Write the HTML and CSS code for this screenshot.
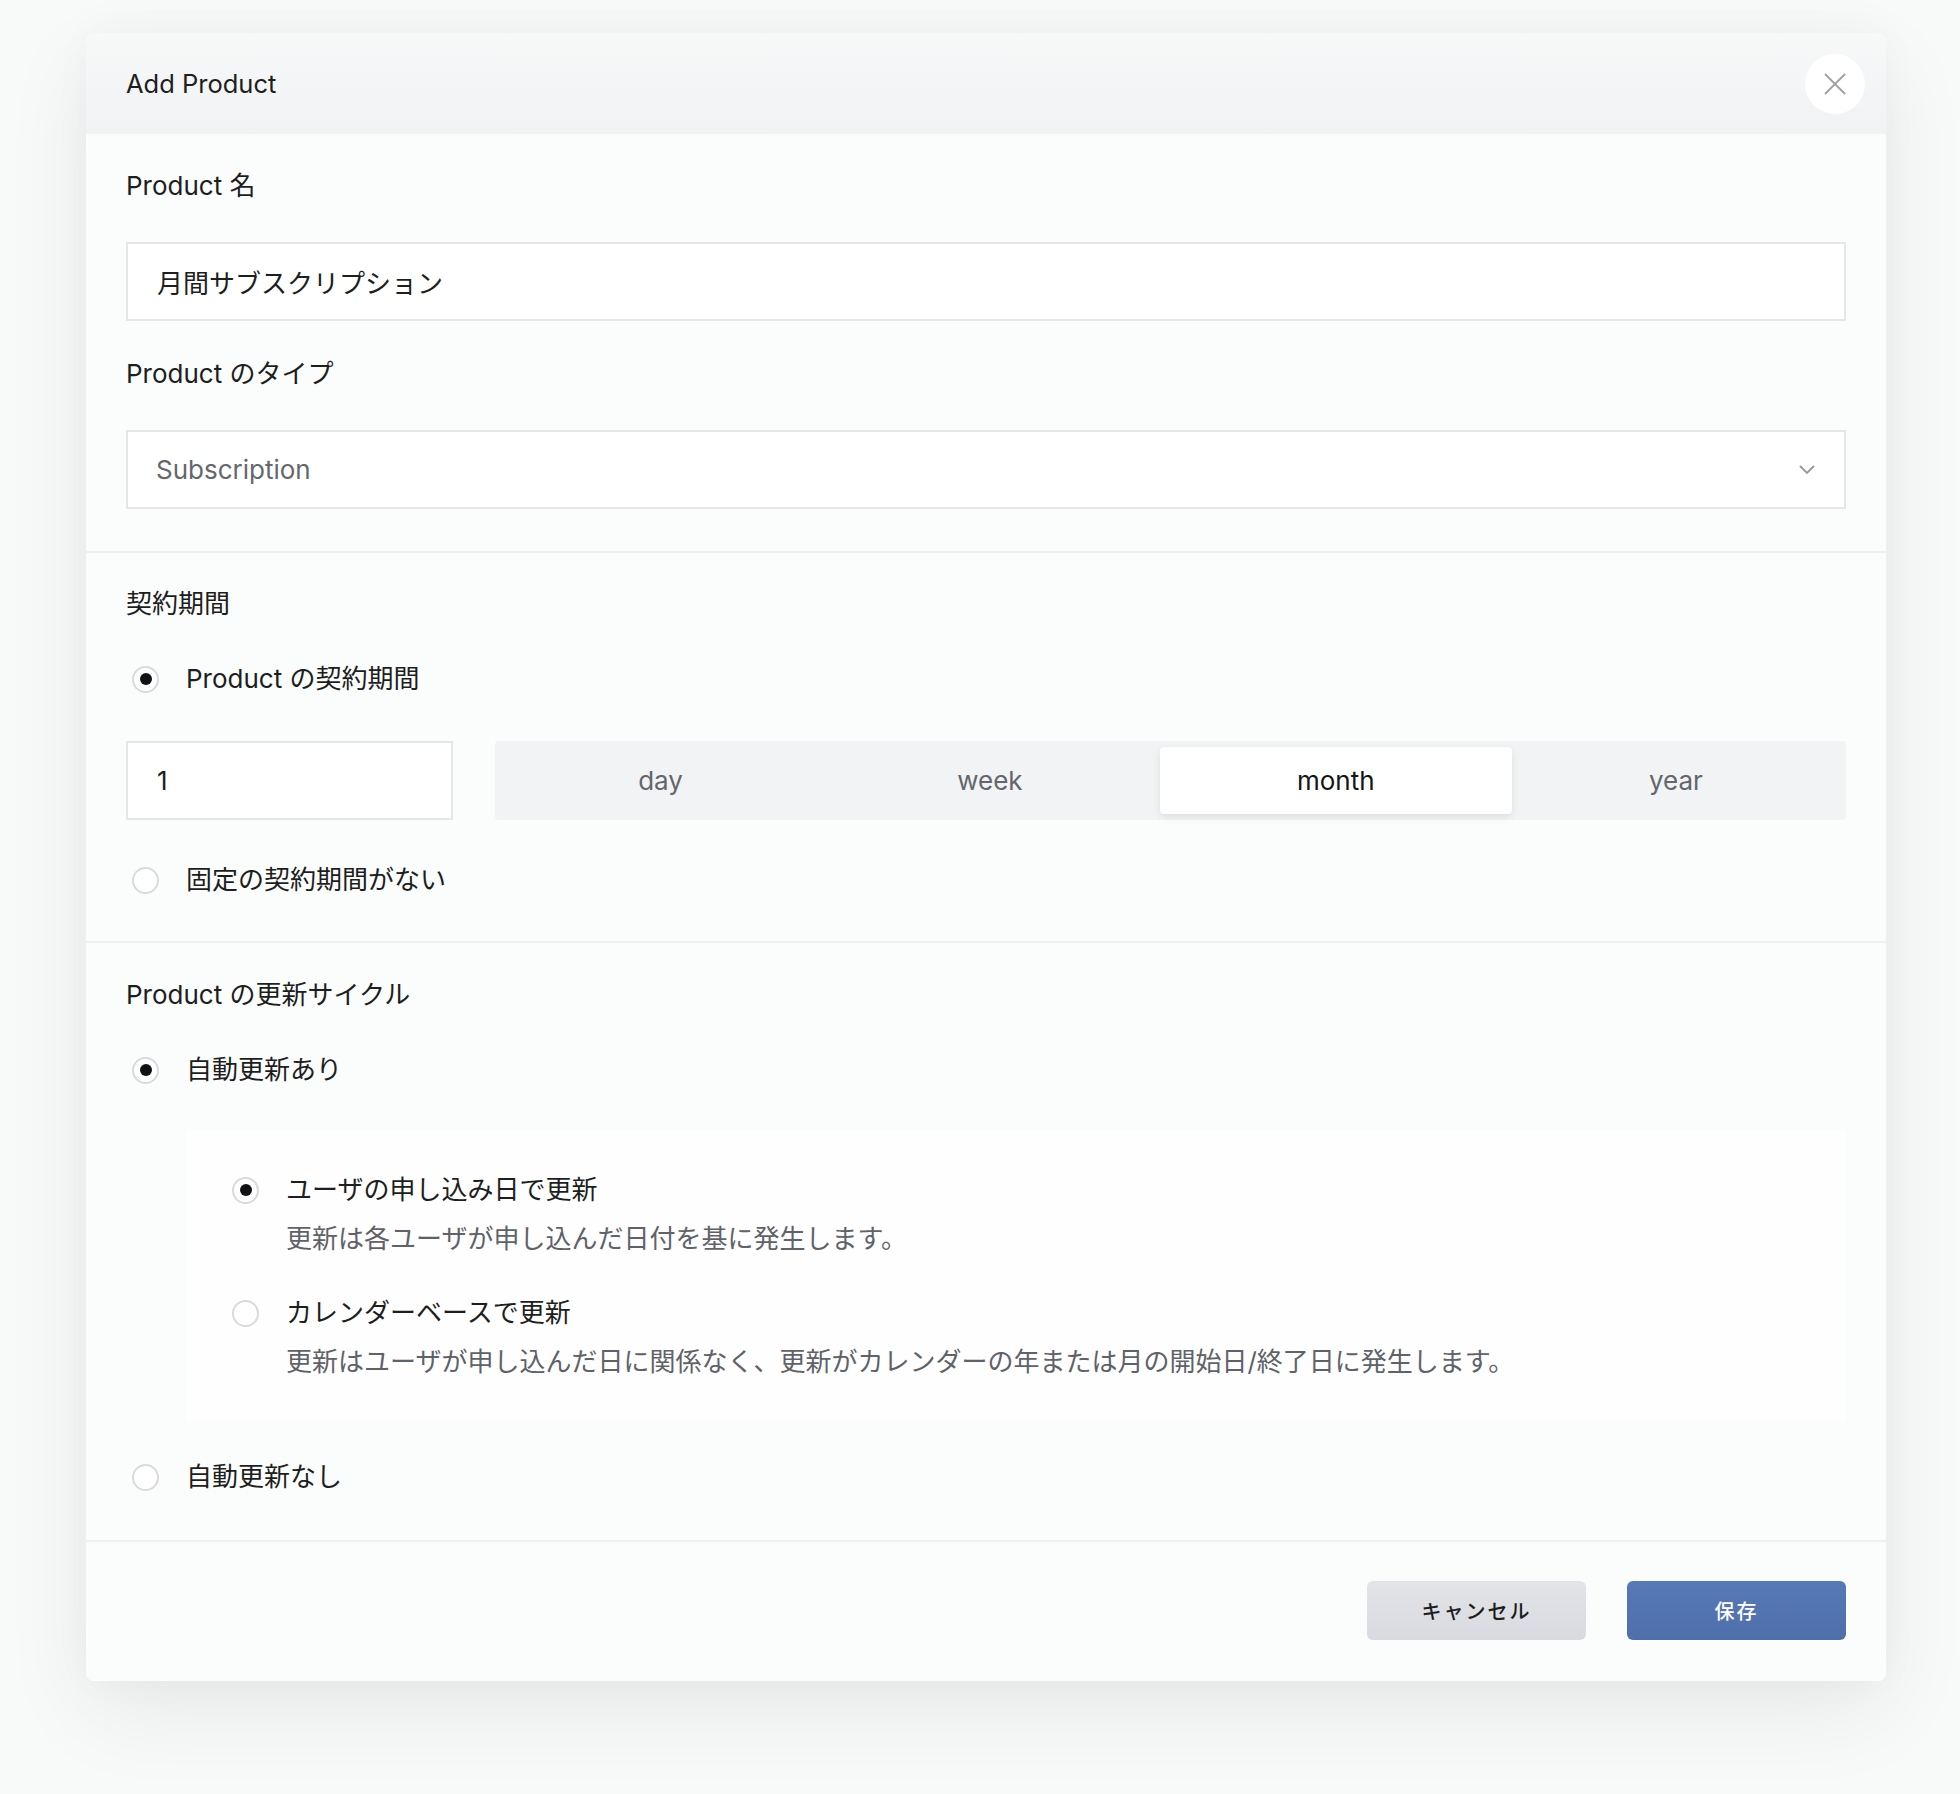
FILE: index.html
```html
<!DOCTYPE html>
<html lang="ja">
<head>
<meta charset="utf-8">
<title>Add Product</title>
<link rel="stylesheet" href="styles.css">
</head>
<body>
<div class="page">
  <div class="modal">
    <div class="modal-header">
      <h1 class="modal-title">Add Product</h1>
      <button class="close-btn" type="button" aria-label="close">
        <svg width="22" height="22" viewBox="0 0 22 22"><path d="M1 1L21 21M21 1L1 21" stroke="#a3a3a3" stroke-width="2" fill="none"/></svg>
      </button>
    </div>
    <div class="card">
      <section class="sec sec-basic">
        <div class="label">Product 名</div>
        <div class="field field-name">月間サブスクリプション</div>
        <div class="label">Product のタイプ</div>
        <div class="field field-select">
          <span class="select-value">Subscription</span>
          <svg class="chevron" width="16" height="9" viewBox="0 0 16 9"><path d="M1 1L8 8L15 1" stroke="#96989c" stroke-width="1.8" fill="none"/></svg>
        </div>
      </section>

      <section class="sec sec-term">
        <div class="label">契約期間</div>
        <div class="radio-row gap-a">
          <span class="radio checked"></span>
          <span class="radio-label">Product の契約期間</span>
        </div>
        <div class="term-row">
          <div class="field field-num">1</div>
          <div class="segmented">
            <div class="seg">day</div>
            <div class="seg">week</div>
            <div class="seg active">month</div>
            <div class="seg">year</div>
          </div>
        </div>
        <div class="radio-row gap-b">
          <span class="radio"></span>
          <span class="radio-label">固定の契約期間がない</span>
        </div>
      </section>

      <section class="sec sec-cycle">
        <div class="label">Product の更新サイクル</div>
        <div class="radio-row gap-a">
          <span class="radio checked"></span>
          <span class="radio-label">自動更新あり</span>
        </div>
        <div class="subbox">
          <div class="sub-option">
            <div class="radio-row sub-row">
              <span class="radio checked"></span>
              <span class="radio-label">ユーザの申し込み日で更新</span>
            </div>
            <div class="desc">更新は各ユーザが申し込んだ日付を基に発生します。</div>
          </div>
          <div class="sub-option sub-second">
            <div class="radio-row sub-row">
              <span class="radio"></span>
              <span class="radio-label">カレンダーベースで更新</span>
            </div>
            <div class="desc">更新はユーザが申し込んだ日に関係なく、更新がカレンダーの年または月の開始日/終了日に発生します。</div>
          </div>
        </div>
        <div class="radio-row gap-c">
          <span class="radio"></span>
          <span class="radio-label">自動更新なし</span>
        </div>
      </section>

      <footer class="footer">
        <button class="btn btn-cancel" type="button">キャンセル</button>
        <button class="btn btn-save" type="button">保存</button>
      </footer>
    </div>
  </div>
</div>
</body>
</html>
```

FILE: styles.css
```css
* { box-sizing: border-box; }

html, body {
  margin: 0;
  padding: 0;
}

body {
  background: #f8f9f9;
  font-family: Inter, "Noto Sans CJK JP", sans-serif;
  color: #1d1e20;
  width: 1960px;
  height: 1794px;
  overflow: hidden;
}

.page {
  padding: 33px 0 0 86px;
}

.modal {
  width: 1800px;
  box-shadow: 0 30px 90px rgba(0, 0, 0, 0.07), 0 0 40px rgba(0, 0, 0, 0.03);
  border-radius: 8px;
}

.modal-header {
  height: 101px;
  background: linear-gradient(#f7f8f8, #f1f2f4);
  border-radius: 8px 8px 0 0;
  display: flex;
  align-items: center;
  justify-content: space-between;
  padding: 0 21px 0 40px;
}

.modal-title {
  margin: 0;
  font-size: 25.5px;
  font-weight: 400;
  line-height: 36px;
  color: #1d1e20;
}

.close-btn {
  width: 60px;
  height: 60px;
  border-radius: 50%;
  border: none;
  background: #ffffff;
  display: flex;
  align-items: center;
  justify-content: center;
  padding: 0;
}

.card {
  background: #fbfcfc;
  border-radius: 0 0 8px 8px;
}

.sec {
  padding: 34px 40px 42px;
  border-bottom: 2px solid #eef0f1;
}

.label {
  font-size: 26px;
  line-height: 36px;
  color: #1d1e20;
}

.sec-basic .label {
  margin-bottom: 38px;
}

.field {
  height: 79px;
  background: #ffffff;
  border: 2px solid #e4e6e8;
  display: flex;
  align-items: center;
  padding: 0 29px;
  font-size: 26px;
  color: #1d1e20;
}

.field-name {
  margin-bottom: 35px;
}

.field-select {
  justify-content: space-between;
  padding: 0 29px 0 28px;
}

.select-value {
  color: #64676d;
}

.sec-term {
  padding: 33px 40px 43px;
}

.radio-row {
  display: flex;
  align-items: center;
  height: 36px;
  padding-left: 6px;
}

.gap-a { margin-top: 39px; }
.gap-b { margin-top: 42px; }
.gap-c { margin-top: 39px; }

.radio {
  width: 27px;
  height: 27px;
  border-radius: 50%;
  border: 2px solid #d8dadd;
  background: #ffffff;
  display: flex;
  align-items: center;
  justify-content: center;
  flex: none;
}

.radio.checked::after {
  content: "";
  width: 12px;
  height: 12px;
  border-radius: 50%;
  background: #111214;
}

.radio-label {
  margin-left: 27px;
  font-size: 26px;
  line-height: 36px;
  color: #1d1e20;
}

.term-row {
  display: flex;
  gap: 42px;
  margin-top: 44px;
}

.field-num {
  width: 327px;
  padding-left: 29px;
}

.segmented {
  flex: 1;
  height: 79px;
  background: #f2f3f5;
  border-radius: 4px;
  padding: 6px;
  display: flex;
}

.seg {
  flex: 1 1 auto;
  display: flex;
  align-items: center;
  justify-content: center;
  font-size: 26px;
  color: #63666c;
  border-radius: 4px;
}

.seg.active {
  background: #ffffff;
  color: #141517;
  box-shadow: 0 3px 8px rgba(0, 0, 0, 0.09);
}

.sec-cycle {
  padding: 34px 40px 45px;
}

.subbox {
  margin: 42px 0 0 60px;
  background: #fefefe;
  padding: 42px 40px 40px 46px;
}

.sub-row {
  padding-left: 0;
}

.sub-row .radio-label {
  margin-left: 27px;
}

.desc {
  margin: 13px 0 0 54px;
  font-size: 26px;
  line-height: 36px;
  color: #5f6268;
}

.sub-second {
  margin-top: 38px;
}

.footer {
  display: flex;
  justify-content: flex-end;
  gap: 41px;
  padding: 39px 40px 41px;
}

.btn {
  width: 219px;
  height: 59px;
  border: none;
  border-radius: 6px;
  font-family: Inter, "Noto Sans CJK JP", sans-serif;
  font-size: 20px;
  font-weight: 500;
  letter-spacing: 2px;
}

.btn-cancel {
  background: linear-gradient(#e3e4e8, #d9dadf);
  color: #1d1e20;
}

.btn-save {
  background: linear-gradient(#5779b5, #4e6fab);
  color: #ffffff;
}
```
